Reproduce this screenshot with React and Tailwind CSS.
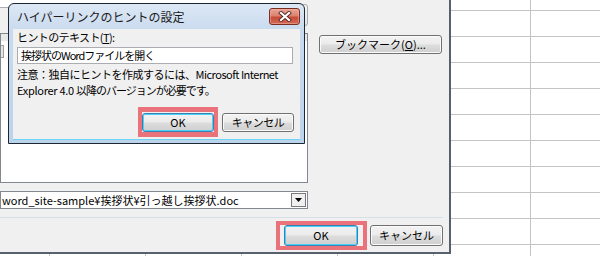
const btn =
  'flex items-center justify-center rounded-[3px] border border-[#707070] bg-[linear-gradient(to_bottom,#f3f3f3_0%,#ebebeb_48%,#dddddd_52%,#cfcfcf_100%)] shadow-[inset_0_0_0_1px_#fbfbfb] text-[11px] leading-none';
const okBtn =
  'flex items-center justify-center rounded-[3px] border border-[#3c7fb1] bg-[linear-gradient(to_bottom,#f3f3f3_0%,#ebebeb_48%,#dddddd_52%,#cfcfcf_100%)] shadow-[inset_0_0_0_1px_#48d2fb] text-[11px] leading-none';

function SheetGrid() {
  const rows = Array.from({ length: 9 });
  const Cells = () => (
    <>
      <div className="w-[50px] shrink-0 border-r border-[#c4c4c4]" />
      <div className="w-[96px] shrink-0 border-r border-[#c4c4c4]" />
      <div className="w-[96px] shrink-0 border-r border-[#c4c4c4]" />
      <div className="w-[96px] shrink-0 border-r border-[#c4c4c4]" />
      <div className="w-[96px] shrink-0 border-r border-[#c4c4c4]" />
      <div className="w-[97px] shrink-0 border-r border-[#c4c4c4]" />
      <div className="flex-1" />
    </>
  );
  return (
    <div className="flex flex-col w-full h-full">
      <div className="flex h-[11px] border-b border-[#c4c4c4]">
        <Cells />
      </div>
      {rows.map((_, i) => (
        <div key={i} className="flex h-[26px] shrink-0 border-b border-[#c4c4c4]">
          <Cells />
        </div>
      ))}
      <div className="flex flex-1">
        <Cells />
      </div>
    </div>
  );
}

function CloseButton() {
  return (
    <div className="ml-auto w-[31px] h-[17px] rounded-[3px] border border-[#7b2d22] bg-[linear-gradient(to_bottom,#eaa597_0%,#dc826f_45%,#c64c38_55%,#d46a55_100%)] shadow-[inset_0_0_0_1px_#f0b8ac80] flex items-center justify-center">
      <svg width="14" height="11" viewBox="0 0 14 11">
        <path d="M3 2 L11 9 M11 2 L3 9" stroke="#5a2a24" strokeWidth="4" strokeLinecap="square" fill="none" />
        <path d="M3 2 L11 9 M11 2 L3 9" stroke="#ffffff" strokeWidth="2.2" strokeLinecap="square" fill="none" />
      </svg>
    </div>
  );
}

function HyperlinkDialog() {
  return (
    <div className="absolute left-0 top-0 w-[451px] h-[254px] bg-[#f0f0f0] border-r-2 border-b-2 border-[#56616d] flex flex-col text-[11px]">
      {/* display text row, mostly hidden under the tip dialog */}
      <div className="h-[26px] flex items-start">
        <div className="h-[8px] w-[290px] border-b border-[#abadb3] bg-white" />
        <div className="ml-[4px] mt-[4px] h-[22px] w-[14px] rounded-r-[3px] border border-[#a9a9a9] bg-[linear-gradient(to_bottom,#f6f8fa,#dfe6ee)]" />
      </div>

      <div className="mt-[7px] flex">
        <div className="w-[308px] h-[150px] border border-[#828790] bg-white">
          <div className="h-[7px] bg-[#e8e8e8]" />
          <div className="mt-[4px] h-[13px] w-[3px] border-r border-y border-[#a0a0a0] bg-[#e4e4e4]" />
        </div>
        <div className="ml-[11px] mt-[2px] flex flex-col">
          <div className={`${btn} w-[123px] h-[19px]`}>
            ブックマーク(<span className="underline">O</span>)...
          </div>
        </div>
      </div>

      <div className="mt-[8px] h-[18px] w-[308px] flex items-center border border-[#828790] bg-white">
        <span className="pl-[1px] whitespace-nowrap leading-none">word_site-sample¥挨拶状¥引っ越し挨拶状.doc</span>
        <div className="ml-auto mr-px w-[15px] h-[14px] border border-[#7a7a7a] bg-[#f0f0f0] flex items-center justify-center">
          <svg width="7" height="4" viewBox="0 0 7 4">
            <path d="M0 0 H7 L3.5 4 Z" fill="#000" />
          </svg>
        </div>
      </div>

      <div className="mt-[8px] h-px w-[443px] bg-[#d5dfe5]" />

      <div className="mt-[3px] flex justify-end pr-[6px] gap-[3px]">
        <div className="border-4 border-[#ea737b] pl-[4px] pr-[5px]">
          <div className={`${okBtn} w-[74px] h-[21px]`}>OK</div>
        </div>
        <div className={`${btn} w-[73px] h-[21px] mt-[4px]`}>キャンセル</div>
      </div>
    </div>
  );
}

function ScreenTipDialog() {
  return (
    <div className="absolute left-[8px] top-[3px] w-[297px] h-[141px] rounded-t-[6px] border border-[#1d2733] bg-[linear-gradient(to_bottom,#dce8f5_0%,#c8daee_20%,#bcd3ec_100%)] px-[4px] pb-[3px] flex flex-col">
      <div className="h-[25px] flex items-center pl-[4px]">
        <span className="text-[12px] text-[#1a1a1a] whitespace-nowrap">ハイパーリンクのヒントの設定</span>
        <CloseButton />
      </div>
      <div className="flex-1 bg-[#f0f0f0] border-b border-[#6fd3f3] flex flex-col pl-[4px] text-[11px]">
        <div className="mt-[2px] h-[13px] leading-[13px] tracking-[-0.6px] whitespace-nowrap">
          ヒントのテキスト(<span className="underline">T</span>):
        </div>
        <div className="mt-[3px] h-[17px] w-[276px] border border-[#abadb3] bg-white flex items-center pl-[3px] tracking-[-1px] whitespace-nowrap leading-none">
          挨拶状のWordファイルを開く
        </div>
        <div className="mt-[4px] flex flex-col gap-[4px] whitespace-nowrap">
          <p className="h-[12px] leading-[12px] tracking-[-0.5px]">注意：独自にヒントを作成するには、Microsoft Internet</p>
          <p className="h-[12px] leading-[12px]">
            <span className="tracking-[-0.3px]">Explorer 4.0 </span>
            <span className="tracking-[-1px]">以降のバージョンが必要です。</span>
          </p>
        </div>
        <div className="mt-[11px] flex justify-end pr-[6px] gap-[4px]">
          <div className="border-x-4 border-y-[5px] border-[#ea737b] pt-px">
            <div className={`${okBtn} w-[72px] h-[19px]`}>OK</div>
          </div>
          <div className={`${btn} w-[72px] h-[19px] mt-[6px] tracking-[-0.5px]`}>キャンセル</div>
        </div>
      </div>
    </div>
  );
}

export default function App() {
  return (
    <div className="relative w-[600px] h-[256px] overflow-hidden bg-white font-['Noto_Sans_CJK_JP',sans-serif] text-black">
      <SheetGrid />
      <HyperlinkDialog />
      <ScreenTipDialog />
    </div>
  );
}
